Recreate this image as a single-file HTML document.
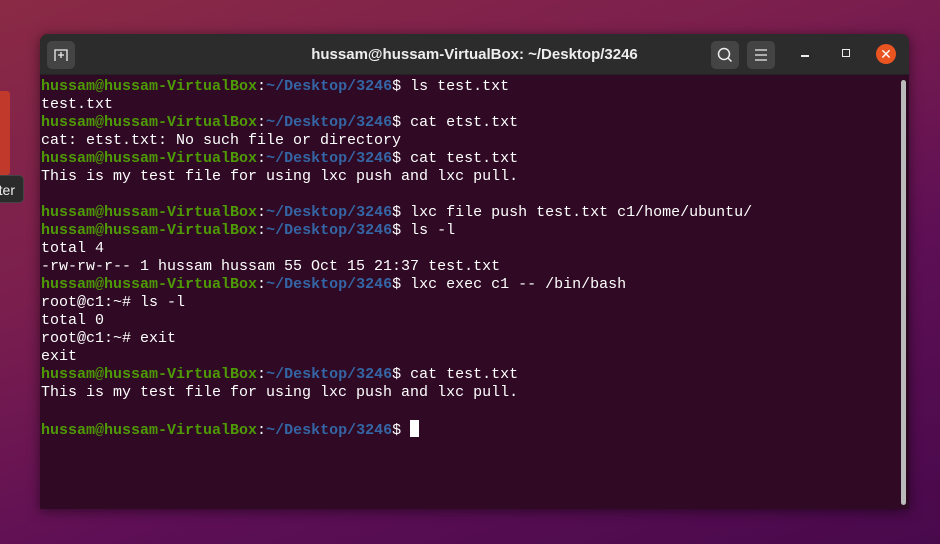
<!DOCTYPE html>
<html><head><style>
html,body{margin:0;padding:0;width:940px;height:544px;overflow:hidden}
body{background:linear-gradient(160deg,#8a2a45 0%,#7a1e4e 35%,#5e0f55 65%,#48094b 100%);position:relative;font-family:"Liberation Sans",sans-serif}
.red{position:absolute;left:0;top:91px;width:10px;height:84px;background:#c0392b;border-radius:0 3px 3px 0}
.tip{position:absolute;left:-10px;top:175px;width:34px;height:28px;background:#2b2b2b;border-radius:5px;color:#eee;font-size:14px;line-height:28px;text-align:right;padding-right:8px;box-sizing:border-box;border:1px solid #444}
.win{position:absolute;left:40px;top:34px;width:869px;height:475px;background:#300a24;border-radius:8px 8px 0 0;overflow:hidden;box-shadow:0 2px 12px rgba(0,0,0,.5)}
.tb{height:40px;background:#2c2c2c;border-bottom:1px solid #222;position:relative;color:#eee}
.title{position:absolute;left:0;right:0;top:1px;text-align:center;line-height:40px;font-weight:bold;font-size:15px}
.btn{position:absolute;top:7px;width:28px;height:28px;background:#444;border-radius:5px}
.term{position:absolute;top:44px;left:1px;font-family:"Liberation Mono",monospace;font-size:15px;line-height:18px;color:#ffffff;white-space:pre}
.g{color:#4e9a06;font-weight:bold}.b{color:#3465a4;font-weight:bold}
.sb{position:absolute;right:3px;top:46px;width:5px;height:425px;background:#bbb;border-radius:3px}
.cur{display:inline-block;width:9px;height:17px;background:#fff;vertical-align:-3px}
</style></head><body>
<div class="red"></div><div class="tip">ter</div>
<div class="win">
<div class="tb">
<div class="btn" style="left:7px"><svg width="28" height="28"><path d="M8 20V9h12v11M14 11v6M11 14h6" stroke="#eee" stroke-width="1.3" fill="none"/></svg></div>
<div class="title">hussam@hussam-VirtualBox: ~/Desktop/3246</div>
<div class="btn" style="left:671px"><svg width="28" height="28"><circle cx="13" cy="13" r="5.5" stroke="#eee" stroke-width="1.5" fill="none"/><path d="M17 17l3.5 3.5" stroke="#eee" stroke-width="1.5"/></svg></div>
<div class="btn" style="left:707px"><svg width="28" height="28"><path d="M8 9h12M8 14h12M8 19h12" stroke="#eee" stroke-width="1.3"/></svg></div>
<div style="position:absolute;left:761px;top:21px;width:8px;height:1.5px;background:#eee"></div>
<div style="position:absolute;left:802px;top:15px;width:6px;height:6px;border:1.5px solid #eee"></div>
<div style="position:absolute;left:836px;top:10px;width:20px;height:20px;border-radius:50%;background:#e95420;color:#fff;text-align:center;line-height:20px;font-size:14px">✕</div>
</div>
<div class="term"><span class="g">hussam@hussam-VirtualBox</span>:<span class="b">~/Desktop/3246</span>$ ls test.txt
test.txt
<span class="g">hussam@hussam-VirtualBox</span>:<span class="b">~/Desktop/3246</span>$ cat etst.txt
cat: etst.txt: No such file or directory
<span class="g">hussam@hussam-VirtualBox</span>:<span class="b">~/Desktop/3246</span>$ cat test.txt
This is my test file for using lxc push and lxc pull.

<span class="g">hussam@hussam-VirtualBox</span>:<span class="b">~/Desktop/3246</span>$ lxc file push test.txt c1/home/ubuntu/
<span class="g">hussam@hussam-VirtualBox</span>:<span class="b">~/Desktop/3246</span>$ ls -l
total 4
-rw-rw-r-- 1 hussam hussam 55 Oct 15 21:37 test.txt
<span class="g">hussam@hussam-VirtualBox</span>:<span class="b">~/Desktop/3246</span>$ lxc exec c1 -- /bin/bash
root@c1:~# ls -l
total 0
root@c1:~# exit
exit
<span class="g">hussam@hussam-VirtualBox</span>:<span class="b">~/Desktop/3246</span>$ cat test.txt
This is my test file for using lxc push and lxc pull.

<span class="g">hussam@hussam-VirtualBox</span>:<span class="b">~/Desktop/3246</span>$ <span class="cur"></span></div>
<div class="sb"></div>
</div>
</body></html>
